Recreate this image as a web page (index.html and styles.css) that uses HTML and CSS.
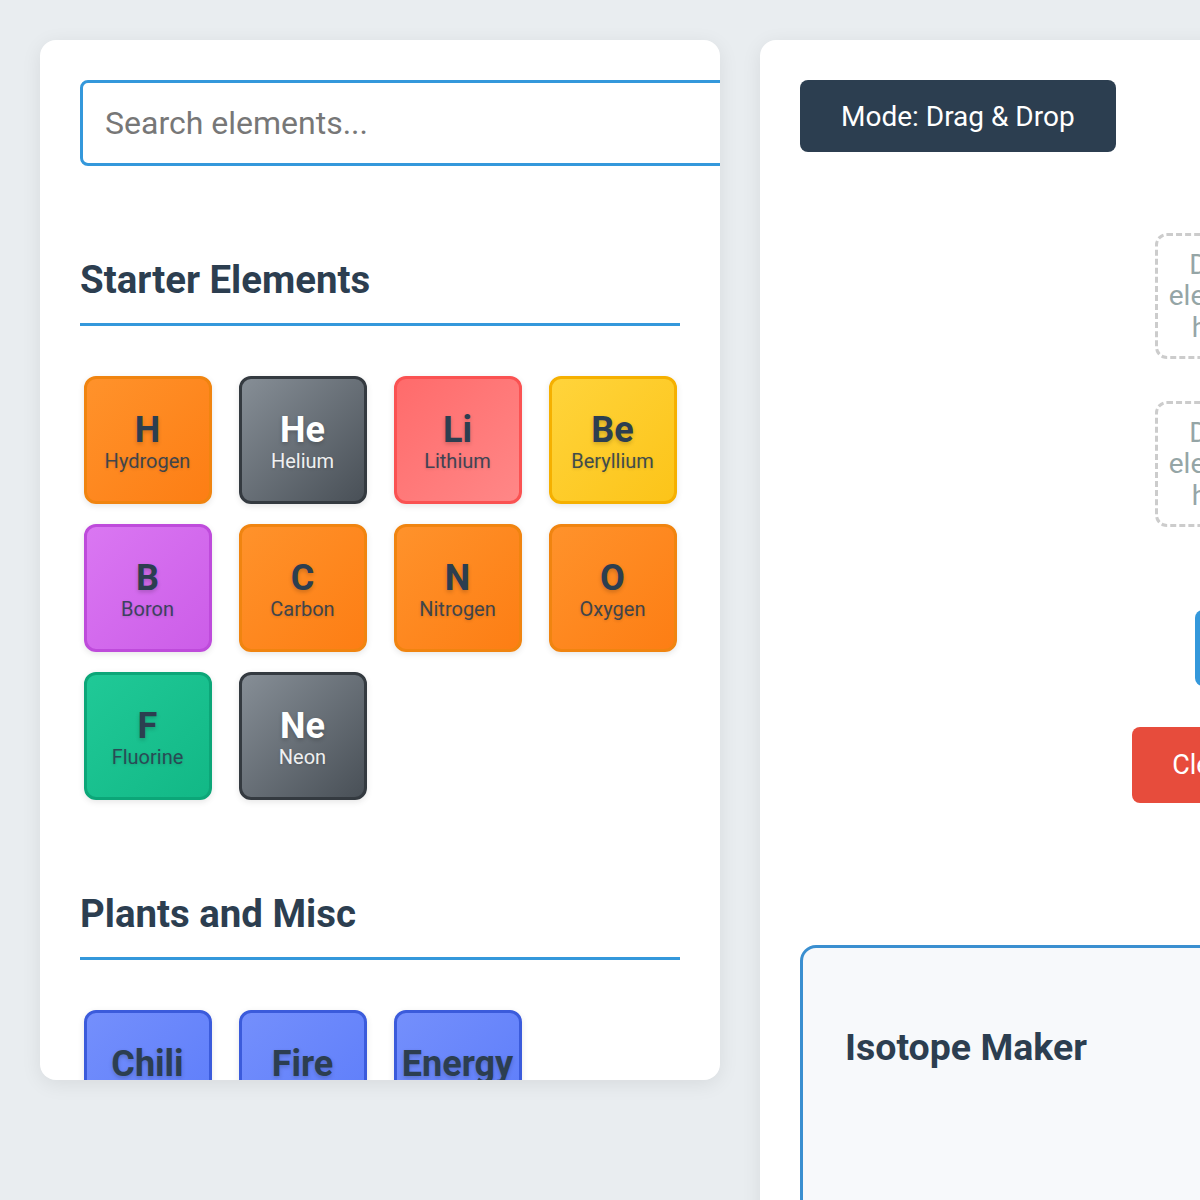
FILE: index.html
```html
<!DOCTYPE html>
<html lang="en">
<head>
    <meta charset="UTF-8">
    <meta name="viewport" content="width=device-width, initial-scale=1.0">
    <title>Element Mixer</title>
    <link rel="stylesheet" href="styles.css">
</head>
<body>

<div class="sidebar">
    <input type="text" class="search-box" placeholder="Search elements...">

    <div class="section">
        <h2>Starter Elements</h2>
        <div class="element-grid">
            <div class="element nonmetal"><span class="symbol">H</span><span class="name">Hydrogen</span></div>
            <div class="element noble"><span class="symbol">He</span><span class="name">Helium</span></div>
            <div class="element alkali"><span class="symbol">Li</span><span class="name">Lithium</span></div>
            <div class="element earth"><span class="symbol">Be</span><span class="name">Beryllium</span></div>
            <div class="element metalloid"><span class="symbol">B</span><span class="name">Boron</span></div>
            <div class="element nonmetal"><span class="symbol">C</span><span class="name">Carbon</span></div>
            <div class="element nonmetal"><span class="symbol">N</span><span class="name">Nitrogen</span></div>
            <div class="element nonmetal"><span class="symbol">O</span><span class="name">Oxygen</span></div>
            <div class="element halogen"><span class="symbol">F</span><span class="name">Fluorine</span></div>
            <div class="element noble"><span class="symbol">Ne</span><span class="name">Neon</span></div>
        </div>
    </div>

    <div class="section">
        <h2>Plants and Misc</h2>
        <div class="element-grid">
            <div class="element misc"><span class="symbol">Chili</span></div>
            <div class="element misc"><span class="symbol">Fire</span></div>
            <div class="element misc"><span class="symbol">Energy</span></div>
        </div>
    </div>
</div>

<div class="workspace">
    <button class="mode-btn">Mode: Drag &amp; Drop</button>

    <div class="mix-area">
        <div class="drop-zone">Drop element here</div>
        <div class="drop-zone second">Drop element here</div>
        <button class="combine-btn">=</button>
        <button class="clear-btn">Clear All</button>
    </div>

    <div class="isotope-box">
        <h3>Isotope Maker</h3>
    </div>
</div>

</body>
</html>
```

FILE: styles.css
```css
html, body {
    overflow: hidden;
}
body {
    margin: 0;
    padding: 40px;
    display: flex;
    align-items: flex-start;
    gap: 40px;
    background-color: #e9edf0;
    font-family: Roboto, "Liberation Sans", Arial, sans-serif;
    color: #2c3e50;
}
.sidebar {
    flex: none;
    width: 600px;
    height: 960px;
    padding: 40px;
    background: #fff;
    border-radius: 16px;
    box-shadow: 0 4px 20px rgba(0, 0, 0, 0.08);
    overflow: hidden;
}
.search-box {
    width: 100%;
    padding: 21px 22px;
    font-family: inherit;
    font-size: 32px;
    color: #2c3e50;
    border: 3px solid #3498db;
    border-radius: 8px;
    outline: none;
}
.search-box::placeholder {
    color: #777;
}
.section {
    margin-top: 91px;
}
.section h2 {
    margin: 0;
    font-size: 38.4px;
    font-weight: 700;
    padding-bottom: 21px;
    border-bottom: 3px solid #3498db;
}
.element-grid {
    margin-top: 50px;
    display: grid;
    grid-template-columns: repeat(4, 1fr);
    gap: 20px;
    justify-items: center;
}
.element {
    box-sizing: border-box;
    width: 128px;
    height: 128px;
    padding-top: 31.5px;
    border: 3px solid;
    border-radius: 12px;
    display: flex;
    flex-direction: column;
    align-items: center;
    box-shadow: 0 2px 6px rgba(0, 0, 0, 0.1);
    color: #2c3e50;
    cursor: grab;
}
.element .symbol {
    font-size: 36px;
    line-height: 39px;
    font-weight: 700;
    text-shadow: 0 2px 4px rgba(0, 0, 0, 0.2);
}
.element .name {
    font-size: 20px;
    line-height: 23px;
    opacity: 0.9;
    text-shadow: 0 1px 3px rgba(0, 0, 0, 0.15);
}
.nonmetal {
    background: linear-gradient(135deg, #ff922b, #fd7e14);
    border-color: #f08410;
}
.noble {
    background: linear-gradient(135deg, #868e96, #495057);
    border-color: #343a40;
    color: #fff;
}
.alkali {
    background: linear-gradient(135deg, #ff6b6b, #ff8787);
    border-color: #fa5252;
}
.earth {
    background: linear-gradient(135deg, #ffd43b, #fcc419);
    border-color: #f5b000;
}
.metalloid {
    background: linear-gradient(135deg, #da77f2, #cc5de8);
    border-color: #be4bdb;
}
.halogen {
    background: linear-gradient(135deg, #20c997, #12b886);
    border-color: #0ca678;
}
.misc {
    background: linear-gradient(135deg, #748ffc, #5c7cfa);
    border-color: #3b5bdb;
}
.workspace {
    flex: none;
    width: 838px;
    min-height: 1300px;
    padding: 40px;
    background: #fff;
    border-radius: 16px;
    box-shadow: 0 4px 20px rgba(0, 0, 0, 0.08);
    display: flex;
    flex-direction: column;
    align-items: flex-start;
}
.mode-btn {
    padding: 19.5px 41px;
    font-family: inherit;
    font-size: 28px;
    color: #fff;
    background: #2c3e50;
    border: none;
    border-radius: 8px;
}
.mix-area {
    align-self: stretch;
    display: flex;
    flex-direction: column;
    align-items: center;
    margin-top: 81px;
}
.drop-zone {
    box-sizing: border-box;
    width: 128px;
    height: 126px;
    padding: 8px;
    border: 3px dashed #ccc;
    border-radius: 12px;
    display: flex;
    align-items: center;
    justify-content: center;
    text-align: center;
    font-size: 28px;
    line-height: 31.5px;
    color: #95a5a6;
}
.drop-zone.second {
    margin-top: 42px;
}
.combine-btn, .clear-btn {
    font-family: inherit;
    color: #fff;
    border: none;
    border-radius: 8px;
}
.combine-btn {
    margin-top: 83px;
    width: 48px;
    height: 76px;
    font-size: 30px;
    background: #3498db;
}
.clear-btn {
    margin-top: 41px;
    width: 174px;
    height: 76px;
    padding: 0 0 0 6px;
    font-size: 27px;
    background: #e74c3c;
}
.isotope-box {
    align-self: stretch;
    margin-top: 142px;
    min-height: 400px;
    padding: 40px 42px;
    background: #f7f9fb;
    border: 3px solid #3a8fd0;
    border-radius: 16px;
}
.isotope-box h3 {
    margin: 37px 0 0;
    font-size: 37.5px;
    font-weight: 700;
}
```
